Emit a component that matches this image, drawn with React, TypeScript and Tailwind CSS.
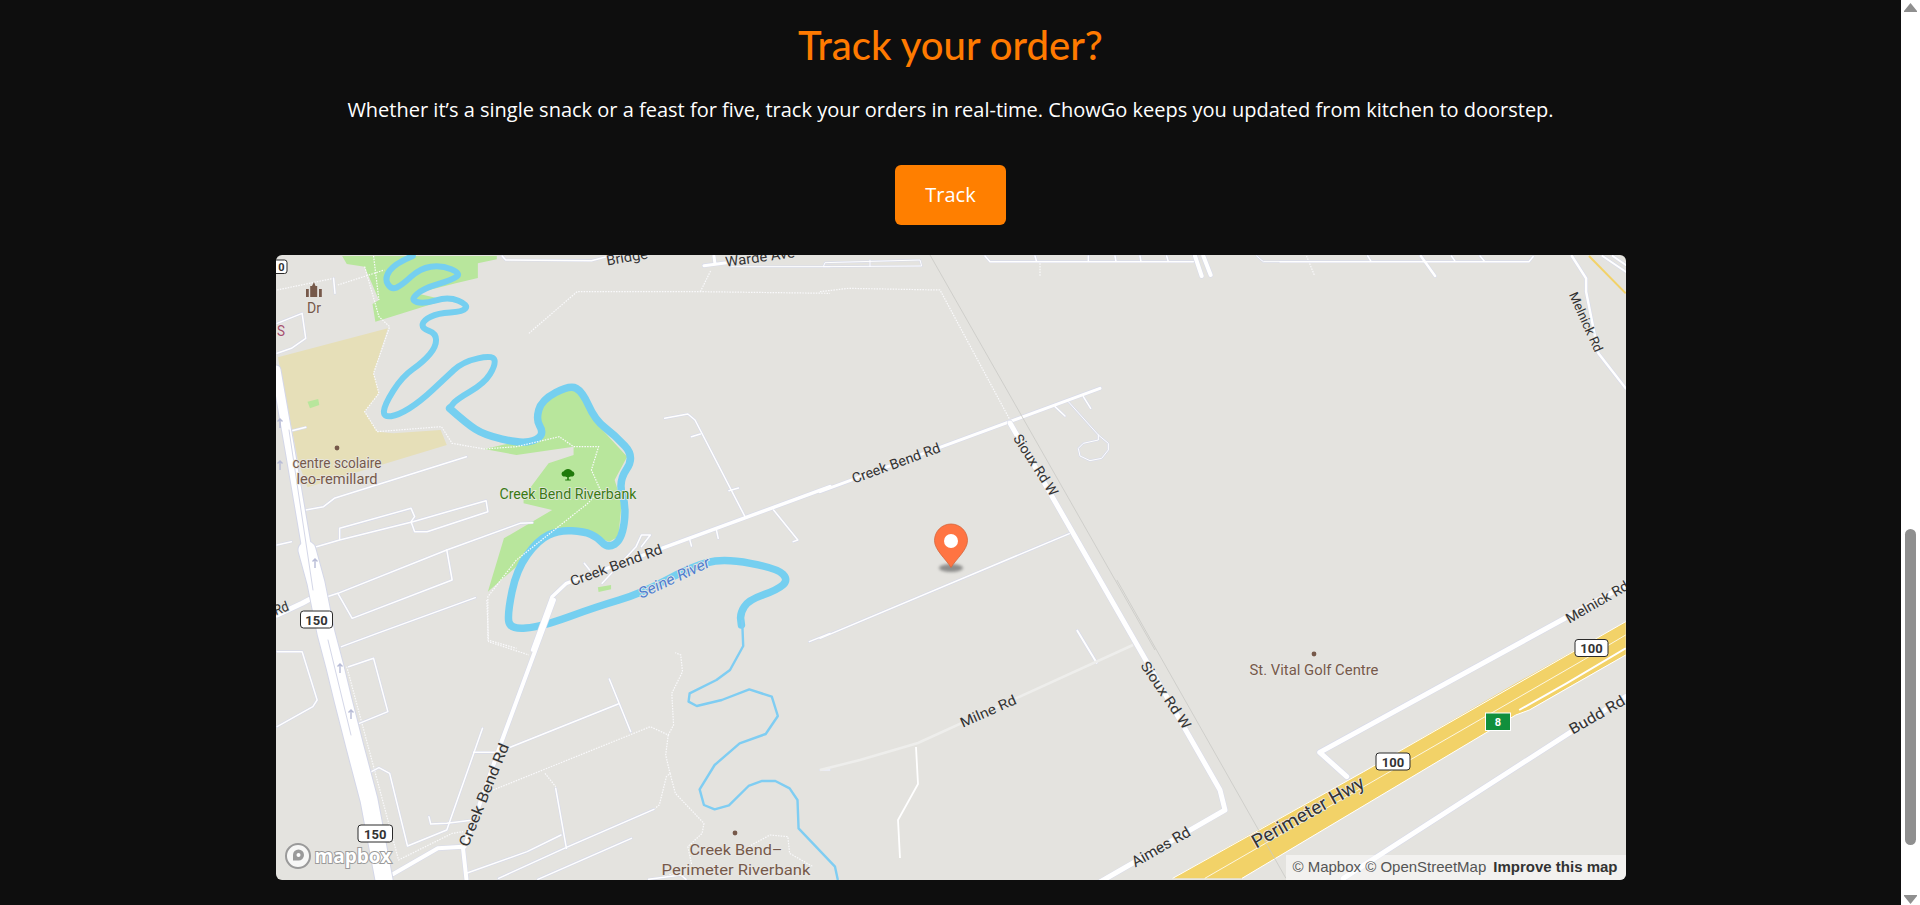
const Z2 = "translate(270 250) scale(0.35714 0.33333)";
const Z3 = "translate(270 600) scale(0.35714 0.33333)";
const Z4 = "translate(820 250) scale(0.33333 0.33333)";
const Z5 = "translate(1100 580) scale(0.33807 0.33333)";
const Z6 = "translate(1280 250) scale(0.40816 0.33333)";

// rounds off the corners of a traced line
function smooth(pts: number[][]) {
  let d = `M${pts[0][0]},${pts[0][1]}`;
  for (let i = 1; i < pts.length - 1; i++) {
    const mx = (pts[i][0] + pts[i + 1][0]) / 2;
    const my = (pts[i][1] + pts[i + 1][1]) / 2;
    d += ` Q${pts[i][0]},${pts[i][1]} ${mx},${my}`;
  }
  const last = pts[pts.length - 1];
  return `${d} L${last[0]},${last[1]}`;
}

const riverUpper = smooth([
  [400, 18], [350, 40], [320, 85], [340, 120], [370, 105], [420, 55], [480, 45], [535, 70], [510, 90], [430, 115],
  [392, 150], [430, 162], [500, 140], [555, 165], [540, 185], [470, 190], [430, 210], [425, 235], [465, 250],
  [465, 290], [430, 335], [370, 380], [320, 465], [318, 502], [360, 495], [420, 455], [490, 385], [540, 335],
  [625, 315], [632, 345], [600, 400], [520, 450], [503, 475],
]);

const riverLower = smooth([
  [503, 475], [550, 520], [600, 555], [700, 580], [750, 570],
  [765, 545], [745, 510], [760, 450], [840, 405], [875, 425], [910, 510], [965, 555], [1022, 620], [975, 695],
  [998, 770], [985, 870], [945, 895], [915, 860], [880, 845], [810, 840], [750, 870], [690, 960], [665, 1090],
  [672, 1138], [760, 1130], [915, 1070], [1040, 1030], [1180, 950], [1270, 925], [1420, 955], [1452, 990],
  [1420, 1020], [1340, 1050], [1316, 1090], [1320, 1125],
]);

const riverThin =
  "M1322,60 1325,138 1288,210 1250,240 1175,280 1172,305 1195,318 1265,300 1342,268 1405,290 1422,348 1388,402 1315,430 1245,495 1203,568 1215,615 1245,628 1285,616 1340,558 1378,543 1415,543 1455,565 1477,600 1480,685 1582,800 1590,840";

const green = "fill-[#b8e69c]";
const parks: [string, string, string][] = [
  [Z2, "M202,18 635,18 635,28 582,40 582,84 520,100 410,130 490,150 295,215 287,162 305,150 265,50 215,42Z", green],
  [Z2, "M850,415 880,440 905,510 1000,620 965,690 985,760 975,860 950,875 910,860 880,840 810,835 750,870 690,950 610,1025 655,865 790,780 710,760 710,740 780,640 850,615 850,590 690,615 600,597 690,575 745,575 770,545 740,510 760,450Z", green],
  [Z2, "M918,1012 955,1005 955,1018 920,1026Z", green],
  [Z2, "M22,322 330,235 290,370 305,430 265,485 300,545 345,550 478,540 495,585 105,712 80,640Z", "fill-[#e6dfb8]"],
  [Z2, "M105,455 135,447 138,465 112,475Z", green],
  [Z5, "M215,895 450,760 780,575 1230,310 1555,125 1555,225 1380,325 1270,390 1230,405 420,895Z", "fill-[#f2d268]"],
];

const trails: [string, string][] = [
  [Z2, "M265,50 305,200 335,230 290,370 305,430 265,485 300,545 480,530 510,580 600,597 690,590 810,560 850,590 920,590 900,660 925,720 890,760 690,930 610,1040 610,1170 690,1195"],
  [Z2, "M725,250 860,125 1205,125 1568,130"],
  [Z2, "M1205,125 1235,60"],
  [Z2, "M20,120 178,85 M190,105 320,60 M290,18 305,150"],
  [Z3, "M607,0 612,125 725,165"],
  [Z3, "M625,570 1065,380 1115,405 1130,375 1125,280 1155,215 1150,165 1135,158"],
  [Z3, "M1115,405 1108,465 1120,520 1110,530 1090,615 1075,628"],
  [Z3, "M1120,520 1135,580 1215,670 1210,700 1170,740 1180,790 1100,835"],
  [Z3, "M770,520 800,560"],
  [Z3, "M215,200 360,780 510,700 540,695"],
  [Z3, "M1340,740 1400,705 1450,710 1455,760 1520,800"],
  [Z4, "M0,125 85,115 360,120 570,510"],
  [Z4, "M660,40 660,78"],
  [Z6, "M65,18 85,78"],
];

const roads: [string, string, number][] = [
  [Z2, "M650,18 660,30 900,32 950,18", 1.5],
  [Z2, "M1285,50 1568,50", 1],
  [Z2, "M178,85 182,130", 1.5],
  [Z2, "M20,220 90,190 100,265 60,295 20,310", 1.5],
  [Z2, "M50,545 100,532", 1.5],
  [Z2, "M100,780 150,770 180,745 550,620", 1.5],
  [Z2, "M20,885 60,875", 1.5],
  [Z2, "M130,890 195,870 195,835 395,775 405,800 395,815 405,845 440,845 610,785 605,752 400,815 195,870", 1.5],
  [Z2, "M190,1030 230,1105 510,990 495,900", 1.5],
  [Z2, "M160,1040 190,1030 495,900 700,820 735,818", 1.5],
  [Z2, "M200,1190 300,1150 575,1043", 1.5],
  [Z2, "M1105,505 1170,492 1190,510 1330,800", 1.5],
  [Z2, "M1180,560 1205,552 M1285,722 1312,714 M1250,840 1255,865 M1175,868 1180,888", 1.5],
  [Z2, "M1410,780 1478,870 1465,875", 1.5],
  [Z2, "M930,1000 1025,890 1040,855 1065,855 1040,890", 1.5],
  [Z2, "M880,940 895,960", 1.5],
  [Z2, "M20,1095 90,1060 125,1040", 5],
  [Z2, "M1215,47 1300,35 M1243,18 1246,42", 3],
  [Z3, "M1510,125 1568,100", 1.5],
  [Z3, "M20,155 90,155 132,300 120,320 20,380", 1.5],
  [Z3, "M220,200 290,175 330,335 250,370", 1.5],
  [Z3, "M275,520 305,503 335,520 385,738 495,690 595,385", 1.5],
  [Z3, "M570,457 645,457 M665,445 975,312 M950,237 1010,395", 1.5],
  [Z3, "M445,650 450,672 495,670 570,660", 1.5],
  [Z3, "M550,820 720,755 815,705 M800,565 830,745 M640,835 830,742 1075,628 M750,838 1012,715", 1.5],
  [Z3, "M1060,838 1150,825 1165,838", 1.5],
  [Z3, "M1540,510 1568,510", 1],
  [Z3, "M550,838 540,740 470,745 345,822", 4],
  [Z3, "M795,0 650,420 545,740", 4],
  [Z2, "M735,1200 790,1040 830,1000 1568,710", 3.5],
  [Z4, "M0,725 840,415", 3],
  [Z4, "M10,50 15,38 300,30 305,48 10,50 M150,30 150,50", 1],
  [Z4, "M495,18 510,35 1120,35 M645,18 650,35 M805,18 805,35 M885,18 888,35 M960,18 963,35 M1040,18 1045,35", 1.5],
  [Z4, "M1125,18 1145,78 M1150,18 1172,75", 4],
  [Z4, "M1310,18 1330,35 1380,35", 1],
  [Z4, "M750,850 0,1165", 1.5],
  [Z4, "M705,470 735,498 M790,440 812,475", 1.5],
  [Z4, "M745,455 835,555 865,580 865,600 845,625 810,632 780,618 775,595 790,580 835,570 835,555", 1],
  [Z4, "M772,1142 830,1238", 2],
  [Z5, "M730,590 650,517 1555,15", 5],
  [Z5, "M720,895 1555,350", 5],
  [Z6, "M0,35 610,35 620,20 M215,18 222,32 M420,18 428,32 M490,18 500,32", 1.5],
  [Z6, "M345,18 380,78", 2.5],
  [Z6, "M715,18 750,85 750,125 780,310 847,415", 2.5],
  [Z6, "M790,18 847,65 M815,18 847,45", 2],
];

const shields: { x: number; y: number; w: number; h: number; t: string }[] = [
  { x: 300.5, y: 611, w: 32, h: 17, t: "150" },
  { x: 358, y: 825, w: 34.5, h: 17, t: "150" },
  { x: 1376, y: 753, w: 34, h: 17, t: "100" },
  { x: 1575, y: 639.5, w: 33, h: 17, t: "100" },
];

const labels: { x: number; y: number; t: string; w: number; a?: number; s?: number; c?: string; i?: boolean }[] = [
  { x: 568, y: 494, t: "Creek Bend Riverbank", w: 137, s: 15, c: "#3a7a14" },
  { x: 314, y: 308, t: "Dr", w: 14, s: 14, c: "#76594a" },
  { x: 281, y: 331, t: "S", w: 8, s: 14, c: "#a5506f" },
  { x: 337, y: 463, t: "centre scolaire", w: 89, s: 14, c: "#76594a" },
  { x: 337, y: 479, t: "leo-remillard", w: 81, s: 14, c: "#76594a" },
  { x: 616, y: 565, t: "Creek Bend Rd", w: 97, a: -20, s: 14, c: "#333" },
  { x: 674, y: 578, t: "Seine River", w: 77, a: -25, s: 15, c: "#4f7ed0", i: true },
  { x: 896, y: 463, t: "Creek Bend Rd", w: 93, a: -20, s: 14, c: "#333" },
  { x: 1036, y: 465, t: "Sioux Rd W", w: 70, a: 57, s: 14, c: "#333" },
  { x: 1166, y: 695, t: "Sioux Rd W", w: 78, a: 56, s: 14, c: "#333" },
  { x: 1314, y: 670, t: "St. Vital Golf Centre", w: 129, s: 15, c: "#76594a" },
  { x: 1308, y: 812, t: "Perimeter Hwy", w: 126, a: -29.5, s: 19, c: "#333" },
  { x: 1161, y: 847, t: "Aimes Rd", w: 65, a: -30, s: 15, c: "#333" },
  { x: 1597, y: 602, t: "Melnick Rd", w: 70, a: -30, s: 14, c: "#333" },
  { x: 1597, y: 715, t: "Budd Rd", w: 62, a: -30, s: 15, c: "#333" },
  { x: 1586, y: 322, t: "Melnick Rd", w: 64, a: 66, s: 13, c: "#333" },
  { x: 484, y: 795, t: "Creek Bend Rd", w: 110, a: -68, s: 15, c: "#333" },
  { x: 988, y: 711, t: "Milne Rd", w: 60, a: -24, s: 14, c: "#333" },
  { x: 736, y: 850, t: "Creek Bend–", w: 93, s: 15, c: "#76594a" },
  { x: 736, y: 870, t: "Perimeter Riverbank", w: 149, s: 15, c: "#76594a" },
  { x: 627, y: 257, t: "Bridge", w: 42, a: -10, s: 14, c: "#333" },
  { x: 760, y: 257, t: "Warde Ave", w: 70, a: -8, s: 14, c: "#333" },
  { x: 281, y: 608, t: "Rd", w: 15, a: -20, s: 14, c: "#333" },
];

const arrows: [number, number][] = [
  [280, 423],
  [280, 465],
  [315, 563],
  [340, 668],
  [351, 714],
];

function MapArt() {
  return (
    <svg viewBox="276 255 1350 625" className="block h-full w-full">
      <rect x="276" y="255" width="1350" height="625" className="fill-[#e4e3df]" />

      {parks.map(([t, d, c], i) => (
        <path key={i} transform={t} d={d} className={c} />
      ))}

      {/* highway casing sits under the yellow's white edge */}
      <g transform={Z5} fill="none">
        <path vectorEffect="non-scaling-stroke" d="M215,895 780,575 1555,125" stroke="#fff" strokeWidth="1" />
        <path vectorEffect="non-scaling-stroke" d="M420,895 1230,405 1270,390 1555,225" stroke="#fff" strokeWidth="1" />
        <path vectorEffect="non-scaling-stroke" d="M310,895 1430,240 1555,165" stroke="#fff" strokeWidth="0.8" />
        <path vectorEffect="non-scaling-stroke" d="M1240,390 1380,310 1555,205" stroke="#fff" strokeWidth="2" />
      </g>

      <path transform={Z6} d="M757,18 847,130" vectorEffect="non-scaling-stroke" fill="none" stroke="#f2d268" strokeWidth="2" />

      <g transform={Z2} fill="none" strokeLinejoin="round" strokeLinecap="round">
        <path vectorEffect="non-scaling-stroke" d={riverUpper} stroke="#75cff0" strokeWidth="6" />
        <path vectorEffect="non-scaling-stroke" d={riverLower} stroke="#75cff0" strokeWidth="7.5" />
      </g>
      <path transform={Z3} vectorEffect="non-scaling-stroke" d={riverThin} fill="none" stroke="#7fcdf2" strokeWidth="2.4" strokeLinejoin="round" />

      {trails.map(([t, d], i) => (
        <path key={i} transform={t} d={d} vectorEffect="non-scaling-stroke" fill="none" stroke="#fafafc" strokeWidth="1.2" strokeDasharray="1.5 1.2" />
      ))}

      <g fill="none" strokeLinejoin="round" strokeLinecap="round">
        {roads.map(([t, d, w], i) => (
          <path key={i} transform={t} d={d} vectorEffect="non-scaling-stroke" stroke="#d8dbea" strokeWidth={w + 1.2} />
        ))}
        {roads.map(([t, d, w], i) => (
          <path key={i} transform={t} d={d} vectorEffect="non-scaling-stroke" stroke="#fff" strokeWidth={w} />
        ))}

        {/* Sioux Rd W and Hwy 150, traced in page coordinates */}
        <path d="M1010,423 1140,650 1220,790 1225,810 1100,882" stroke="#d8dbea" strokeWidth="6" />
        <path d="M1010,423 1140,650 1220,790 1225,810 1100,882" stroke="#fff" strokeWidth="5" />
        <path d="M276,370 290,450 307,550" stroke="#d4d7e8" strokeWidth="11" />
        <path d="M307,550 316,583 326,633 335,667 343,700 355,747 369,800 385,885" stroke="#d4d7e8" strokeWidth="19" />
        <path d="M276,370 290,450 307,550" stroke="#fff" strokeWidth="9" />
        <path d="M307,550 316,583 326,633 335,667 343,700 355,747 369,800 385,885" stroke="#fff" strokeWidth="17" />
        <path d="M289,430 313,590 M328,640 351,735" stroke="#d4d7e8" strokeWidth="1" />
      </g>

      {/* Milne Rd is a lighter, unpaved looking strip */}
      <path d="M1133,645 918,743 860,760 820,770" fill="none" stroke="#eeeeec" strokeWidth="2.5" />
      <path d="M916,747 918,784 898,820 900,858" fill="none" stroke="#fff" strokeWidth="1.8" />

      {/* boundary line */}
      <g fill="none" stroke="#c9c9c5" strokeWidth="0.8">
        <path d="M930,255 1155,650" />
        <path transform={Z5} vectorEffect="non-scaling-stroke" d="M50,0 550,895" />
      </g>

      {arrows.map(([x, y], i) => (
        <path key={i} d={`M${x},${y + 5} ${x},${y - 4} M${x - 2.5},${y - 1.5} ${x},${y - 4} ${x + 2.5},${y - 1.5}`} fill="none" stroke="#b7bbd6" strokeWidth="1.4" />
      ))}

      {/* points of interest */}
      <circle cx="337" cy="448" r="2.4" className="fill-[#76594a]" />
      <circle cx="735" cy="833" r="2.4" className="fill-[#76594a]" />
      <circle cx="1314" cy="654" r="2.4" className="fill-[#76594a]" />
      <path d="M314,282 l1.5,4 h1.7 v11 h-7 v-11 h1.8Z M306,289 h2.8 v8 h-2.8Z M319,289 h2.8 v8 h-2.8Z" className="fill-[#76594a]" />
      <path d="M568,469 c2,0 3.5,1 4,2.2 c1.6,.2 2.6,1.6 2.4,3 c-.2,1.6 -1.8,2.6 -3.6,2.3 c-.6,.4 -1.2,.5 -2,.4 v2.6 h2 v1 h-5.6 v-1 h2 v-2.6 c-.8,.1 -1.4,0 -2,-.4 c-1.8,.3 -3.4,-.7 -3.6,-2.3 c-.2,-1.4 .8,-2.8 2.4,-3 c.5,-1.2 2,-2.2 4,-2.2Z" className="fill-[#1f7a0a]" />

      {labels.map((l, i) => (
        <text
          key={i}
          x={l.x}
          y={l.y}
          fontSize={l.s}
          fill={l.c}
          textAnchor="middle"
          dominantBaseline="central"
          textLength={l.w}
          lengthAdjust="spacingAndGlyphs"
          transform={l.a ? `rotate(${l.a} ${l.x} ${l.y})` : undefined}
          stroke="#e8e7e4"
          strokeWidth="1.6"
          paintOrder="stroke"
          className={`font-['Roboto',sans-serif] ${l.i ? "italic" : ""}`}
        >
          {l.t}
        </text>
      ))}

      {shields.map((s, i) => (
        <g key={i}>
          <rect x={s.x} y={s.y} width={s.w} height={s.h} rx="3" fill="#fff" stroke="#2a2a2a" strokeWidth="1" />
          <text x={s.x + s.w / 2} y={s.y + s.h / 2 + 0.5} fontSize="13" fontWeight="700" fill="#333" textAnchor="middle" dominantBaseline="central" className="font-['Roboto',sans-serif]">
            {s.t}
          </text>
        </g>
      ))}
      <rect x="270" y="260" width="17" height="13.5" rx="2.5" fill="#fff" stroke="#2a2a2a" strokeWidth="1" />
      <text x="281.5" y="267.5" fontSize="11" fontWeight="700" fill="#333" textAnchor="middle" dominantBaseline="central" className="font-['Roboto',sans-serif]">
        0
      </text>
      <rect x="1485.5" y="713" width="25" height="17.5" fill="#118f3c" stroke="#fff" strokeWidth="1" />
      <text x="1498" y="722.3" fontSize="11" fontWeight="700" fill="#fff" textAnchor="middle" dominantBaseline="central" className="font-['Roboto',sans-serif]">
        8
      </text>

      {/* marker */}
      <ellipse cx="951" cy="568" rx="12" ry="4" fill="#555" opacity="0.6" className="blur-[1.5px]" />
      <path d="M951,567.5 C946,559 934.5,550 934.5,540.5 A16.5,16.5 0 0 1 967.5,540.5 C967.5,550 956,559 951,567.5Z" fill="#ff7442" stroke="#d4663c" strokeWidth="0.8" />
      <circle cx="951" cy="541" r="7" fill="#fff" />

      {/* mapbox logo */}
      <g fill="none">
        <circle cx="298" cy="856" r="12" fill="#fff" fillOpacity="0.7" stroke="#9a9a9a" strokeWidth="2" />
        <path d="M293,862 V855 a5.5,5.5 0 1 1 5.5,5.5 H293Z" fill="#9a9a9a" />
        <circle cx="298.5" cy="855" r="2" fill="#fff" />
      </g>
      <text x="353" y="863" fontSize="20" fontWeight="700" textAnchor="middle" textLength="77" lengthAdjust="spacingAndGlyphs" fill="#fff" stroke="#9a9a9a" strokeWidth="2" paintOrder="stroke" className="font-['Open_Sans',sans-serif]">
        mapbox
      </text>
    </svg>
  );
}

export default function App() {
  return (
    <div className="flex h-[905px] overflow-hidden bg-[#0e0e0e]">
      <main className="flex flex-1 flex-col items-center">
        <h2 className="mt-[18px] text-[40px] leading-[54px] font-medium text-[#ff7a00] font-['Lato',sans-serif]">Track your order?</h2>
        <p className="mt-[24px] text-[20px] leading-[28px] text-white font-['Open_Sans',sans-serif]">
          Whether it’s a single snack or a feast for five, track your orders in real-time. ChowGo keeps you updated from kitchen to doorstep.
        </p>
        <button type="button" className="mt-[41px] h-[60px] w-[111px] rounded-[6px] bg-[#ff7f00] text-[20px] font-medium text-white font-['Open_Sans',sans-serif]">
          Track
        </button>
        <div className="relative mt-[30px] h-[625px] w-[1350px] overflow-hidden rounded-[6px]">
          <MapArt />
          <div className="absolute right-0 bottom-0 flex h-[25px] items-center gap-[7px] bg-white/50 pr-[8px] pl-[6px] text-[15px] font-['Liberation_Sans',sans-serif]">
            <span className="text-[#555]">© Mapbox © OpenStreetMap</span>
            <span className="font-bold text-[#333]">Improve this map</span>
          </div>
        </div>
      </main>
      <aside className="flex w-[19px] flex-col items-center bg-white">
        <svg viewBox="0 0 13 9" className="mt-[3px] h-[9px] w-[13px] fill-[#8f8f8f]">
          <path d="M6.5 0 13 8v1H0V8z" />
        </svg>
        <div className="mt-[517px] h-[316px] w-[11px] rounded-full bg-[#8f8f8f]" />
        <svg viewBox="0 0 13 9" className="mt-[50px] h-[9px] w-[13px] fill-[#8f8f8f]">
          <path d="M6.5 9 13 1V0H0v1z" />
        </svg>
      </aside>
    </div>
  );
}
